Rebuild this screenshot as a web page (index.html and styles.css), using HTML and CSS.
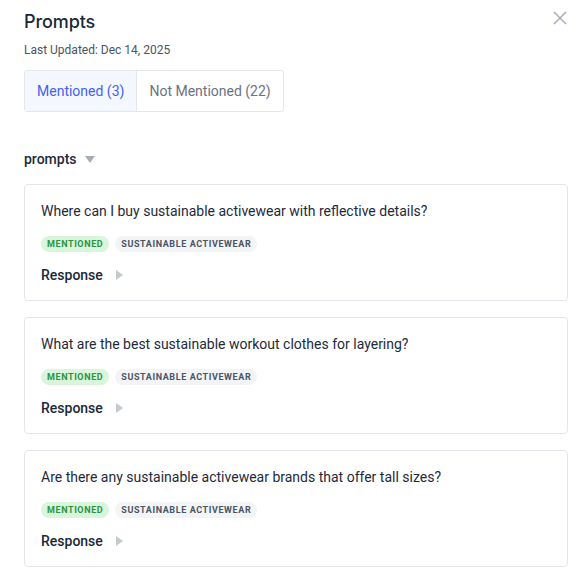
FILE: index.html
```html
<!DOCTYPE html>
<html>
<head>
<meta charset="utf-8">
<link rel="stylesheet" href="styles.css">
</head>
<body>
<div class="panel">
  <div class="header">
    <div>
      <h1 class="title">Prompts</h1>
      <div class="updated">Last Updated: Dec 14, 2025</div>
    </div>
    <button class="close" aria-label="Close">
      <svg width="14" height="14" viewBox="0 0 14 14"><path d="M1 1L13 13M13 1L1 13" stroke="#a9b0ba" stroke-width="1.6" fill="none"/></svg>
    </button>
  </div>
  <div class="tabs">
    <div class="tab active">Mentioned (3)</div>
    <div class="tab">Not Mentioned (22)</div>
  </div>
  <div class="section-head">prompts <span class="tri-down"></span></div>
  <div class="list">
    <div class="card">
      <div class="q">Where can I buy sustainable activewear with reflective details?</div>
      <div class="badges"><span class="badge green">MENTIONED</span><span class="badge grey">SUSTAINABLE ACTIVEWEAR</span></div>
      <div class="resp">Response <span class="tri-right"></span></div>
    </div>
    <div class="card">
      <div class="q">What are the best sustainable workout clothes for layering?</div>
      <div class="badges"><span class="badge green">MENTIONED</span><span class="badge grey">SUSTAINABLE ACTIVEWEAR</span></div>
      <div class="resp">Response <span class="tri-right"></span></div>
    </div>
    <div class="card">
      <div class="q">Are there any sustainable activewear brands that offer tall sizes?</div>
      <div class="badges"><span class="badge green">MENTIONED</span><span class="badge grey">SUSTAINABLE ACTIVEWEAR</span></div>
      <div class="resp">Response <span class="tri-right"></span></div>
    </div>
  </div>
</div>
</body>
</html>
```

FILE: styles.css
```css
html, body {
  margin: 0;
  padding: 0;
  background: #ffffff;
}
body {
  font-family: Roboto, "Liberation Sans", sans-serif;
  color: #1e2a3b;
}
.panel {
  padding: 10px 12px 0 24px;
  width: 580px;
  box-sizing: border-box;
}
.header {
  display: flex;
  justify-content: space-between;
  align-items: flex-start;
}
.title {
  margin: 0;
  font-family: Inter, "Noto Sans", sans-serif;
  font-size: 18px;
  font-weight: 500;
  line-height: 24px;
  color: #1b2838;
  letter-spacing: -0.1px;
}
.updated {
  margin-top: 8px;
  font-size: 12px;
  line-height: 16px;
  color: #4a5462;
}
.close {
  border: 0;
  background: none;
  padding: 0;
  margin: 1px 1px 0 0;
  width: 14px;
  height: 14px;
  display: flex;
}
.tabs {
  display: inline-flex;
  margin-top: 12px;
  border: 1px solid #e3e7ec;
  border-radius: 3px;
  overflow: hidden;
}
.tab {
  height: 40px;
  display: flex;
  align-items: center;
  padding: 0 12px;
  font-size: 14px;
  color: #6b7383;
}
.tab.active {
  background: #f4f7fd;
  color: #4461f0;
  border-right: 1px solid #e3e7ec;
}
.section-head {
  margin-top: 37px;
  font-size: 14px;
  font-weight: 500;
  line-height: 20px;
  color: #1e2a3b;
  display: flex;
  align-items: center;
}
.tri-down {
  display: inline-block;
  margin-left: 8px;
  width: 0;
  height: 0;
  border-left: 5px solid transparent;
  border-right: 5px solid transparent;
  border-top: 7px solid #a8adb6;
}
.list {
  margin-top: 15px;
  display: flex;
  flex-direction: column;
  gap: 16px;
}
.card {
  border: 1px solid #e3e6ea;
  border-radius: 4px;
  padding: 16px 16px 15px 16px;
}
.q {
  font-size: 14px;
  line-height: 20px;
  color: #1e2a3b;
}
.badges {
  margin-top: 15px;
  display: flex;
  gap: 6px;
}
.badge {
  height: 16px;
  line-height: 16px;
  padding: 0 6px;
  border-radius: 8px;
  font-size: 9px;
  font-weight: 700;
  letter-spacing: 0.6px;
}
.badge.green {
  background: #d9f5db;
  color: #2b9440;
}
.badge.grey {
  background: #f3f4f6;
  color: #4a5566;
}
.resp {
  margin-top: 13px;
  font-size: 14px;
  font-weight: 500;
  line-height: 20px;
  color: #1b2838;
  display: flex;
  align-items: center;
}
.tri-right {
  display: inline-block;
  margin-left: 13px;
  width: 0;
  height: 0;
  border-top: 5px solid transparent;
  border-bottom: 5px solid transparent;
  border-left: 7px solid #c4c8cf;
}
```
